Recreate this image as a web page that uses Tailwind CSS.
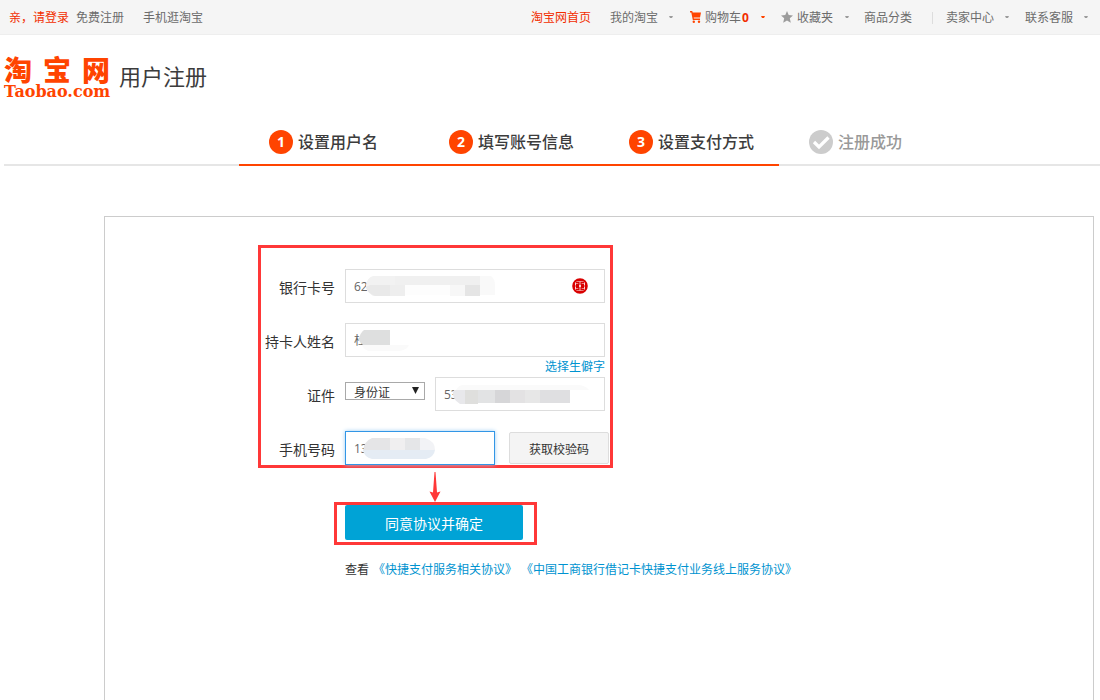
<!DOCTYPE html>
<html lang="zh-CN">
<head>
<meta charset="utf-8">
<meta name="viewport" content="width=device-width, initial-scale=1">
<title>用户注册</title>
<script src="https://cdn.jsdelivr.net/npm/@tailwindcss/browser@4"></script>
</head>
<body class="flex min-h-screen flex-col overflow-x-hidden bg-white font-['Open_Sans','Noto_Sans_CJK_SC',sans-serif] text-xs text-[#333]">

<nav class="flex h-[35px] shrink-0 items-center border-b border-[#eee] bg-[#f5f5f5] pt-px pl-[9px] pr-3 leading-4 whitespace-nowrap text-[#6c6c6c]">
  <a href="#" class="text-[#f22e00]">亲，请登录</a>
  <a href="#" class="ml-[7px]">免费注册</a>
  <a href="#" class="ml-[19px]">手机逛淘宝</a>
  <div class="ml-auto flex items-center">
    <a href="#" class="text-[#f22e00]">淘宝网首页</a>
    <a href="#" class="ml-[19px] flex items-center gap-[11px]">我的淘宝
      <svg class="mb-[2px] h-[2px] w-1 fill-[#9c9c9c]" viewBox="0 0 4 2"><path d="M0 0h4L3 2H1z"/></svg></a>
    <a href="#" class="ml-[17px] flex items-center">
      <svg class="mr-1 mb-px h-3 w-[11px] fill-[#ff4400]" viewBox="0 0 11 12"><path d="M0 0h2.2l.5 1.500H11L10 6.500H3.700l.2 1H10V9H2.800L1.300 1.500H0z"/><circle cx="3.800" cy="10.700" r="1.200"/><circle cx="9" cy="10.700" r="1.200"/></svg>
      购物车<b class="ml-px w-2 text-[#f22e00]">0</b>
      <svg class="ml-[11px] mb-[2px] h-[2px] w-1 fill-[#ff4400]" viewBox="0 0 4 2"><path d="M0 0h4L3 2H1z"/></svg></a>
    <a href="#" class="ml-4 flex items-center">
      <svg class="mr-1 mb-px h-3 w-3 fill-[#9c9c9c]" viewBox="0 0 12 12"><path d="M6 0l1.700 4 4.300.4-3.200 2.900 1 4.400L6 9.400l-3.800 2.300 1-4.400L0 4.400 4.300 4z"/></svg>
      收藏夹
      <svg class="ml-3 mb-[2px] h-[2px] w-1 fill-[#9c9c9c]" viewBox="0 0 4 2"><path d="M0 0h4L3 2H1z"/></svg></a>
    <a href="#" class="ml-[15px]">商品分类</a>
    <span class="ml-5 h-3 w-px bg-[#ddd]"></span>
    <a href="#" class="ml-[13px] flex items-center gap-[11px]">卖家中心
      <svg class="mb-[2px] h-[2px] w-1 fill-[#9c9c9c]" viewBox="0 0 4 2"><path d="M0 0h4L3 2H1z"/></svg></a>
    <a href="#" class="ml-4 flex items-center gap-[11px]">联系客服
      <svg class="mb-[2px] h-[2px] w-1 fill-[#9c9c9c]" viewBox="0 0 4 2"><path d="M0 0h4L3 2H1z"/></svg></a>
  </div>
</nav>

<header class="flex h-[87px] shrink-0 items-start pl-1 pt-5">
  <a href="#" aria-label="淘宝网" class="w-[106px] text-[#ff4400]">
    <span class="flex h-7 items-center justify-between font-['Noto_Sans_CJK_SC',sans-serif] text-[28px] font-black leading-7"><span>淘</span><span>宝</span><span>网</span></span>
    <span class="block pt-px text-center font-['DejaVu_Serif',serif] text-base font-bold leading-4">Taobao.com</span>
  </a>
  <h1 class="ml-[9px] mt-[5px] text-[22px] leading-8 text-[#3c3c3c]">用户注册</h1>
</header>

<ol class="ml-1 flex h-11 shrink-0 text-base font-medium text-[#3c3c3c]">
  <li class="w-[235px] shrink-0 border-b-2 border-[#e6e6e6]" role="presentation"></li>
  <li class="flex w-[180px] items-start gap-[5px] border-b-2 border-[#ff4400] pl-[30px] pt-2 leading-6"><span class="flex size-6 items-center justify-center rounded-full bg-[#ff4400] text-sm font-bold text-white">1</span>设置用户名</li>
  <li class="flex w-[180px] items-start gap-[5px] border-b-2 border-[#ff4400] pl-[30px] pt-2 leading-6"><span class="flex size-6 items-center justify-center rounded-full bg-[#ff4400] text-sm font-bold text-white">2</span>填写账号信息</li>
  <li class="flex w-[180px] items-start gap-[5px] border-b-2 border-[#ff4400] pl-[30px] pt-2 leading-6"><span class="flex size-6 items-center justify-center rounded-full bg-[#ff4400] text-sm font-bold text-white">3</span>设置支付方式</li>
  <li class="flex grow items-start gap-[5px] border-b-2 border-[#e6e6e6] pl-[30px] pt-2 leading-6 text-[#999]"><svg class="size-6" viewBox="0 0 24 24"><circle cx="12" cy="12" r="12" fill="#ccc"/><path d="M5 12l5 5L19.500 7.500" fill="none" stroke="#fff" stroke-width="3.200"/></svg>注册成功</li>
</ol>

<main class="ml-[104px] mr-[6px] mt-[50px] grow border border-b-0 border-[#ccc] pb-10 pl-[153px] pt-7">
  <form>
    <div class="flex w-[355px] flex-col border-3 border-[#ff3838] pt-[21px]">
      <div class="flex h-[34px] gap-[10px]">
        <label for="card" class="w-[74px] pt-[9px] text-right text-sm leading-5 whitespace-nowrap">银行卡号</label>
        <div class="relative w-[260px]">
          <input id="card" value="62" class="h-[34px] w-full border border-[#ddd] px-2 text-xs text-[#666] outline-none">
          <svg class="absolute left-5 top-[7px] h-5 w-[130px]" viewBox="0 0 130 20"><path d="M8 0h22v20H8Q0 15 1 9 2 2 8 0" fill="#f2f2f2"/><path d="M5 9h20v11H10Q2 17 1 11z" fill="#e9e9e9"/><path d="M25 9h15v11H25z" fill="#eee"/><path d="M30 0h85v9H30z" fill="#f0f0f0"/><path d="M40 9h45v10H40z" fill="#fdfdfd"/><path d="M85 9h15v11H85z" fill="#f7f7f7"/><path d="M100 9h15v11h-15z" fill="#e5e5e5"/><path d="M115 0h11q4 3 4 9v10h-15z" fill="#f9f9f9"/></svg>
          <svg class="absolute left-[227px] top-[9px] size-4" viewBox="0 0 16 16" fill="none"><circle cx="8" cy="8" r="6.800" fill="#fff" stroke="#d90000" stroke-width="2"/><path d="M5 2.500h6M5 13.500h6M2.500 5v6M13.500 5v6M4 4.500h3v2H4M12 4.500H9v2h3M4 11.500h3v-2H4M12 11.500H9v-2h3M3.500 8H7M9 8h3.500" stroke="#d90000" stroke-width="1.300"/></svg>
        </div>
      </div>
      <div class="mt-5 flex h-[34px] gap-[10px]">
        <label for="holder" class="w-[74px] pt-[9px] text-right text-sm leading-5 whitespace-nowrap">持卡人姓名</label>
        <div class="relative w-[260px]">
          <input id="holder" value="杜" class="h-[34px] w-full border border-[#ddd] px-2 text-xs text-[#666] outline-none">
          <svg class="absolute left-[14px] top-[7px] h-[22px] w-[52px]" viewBox="0 0 52 22"><path d="M5 0h26v16H6Q0 13 0 9 1 3 5 0" fill="#dedfdf"/><path d="M3 15h47q-3 6-12 6H10Q5 20 3 15" fill="#fafafa"/></svg>
        </div>
      </div>
      <a href="#" class="mr-[5px] h-5 self-end text-xs leading-5 text-[#0093d0]">选择生僻字</a>
      <div class="flex h-[34px] gap-[10px]">
        <label for="idtype" class="w-[74px] pt-[9px] text-right text-sm leading-5 whitespace-nowrap">证件</label>
        <div class="relative mt-[5px] h-[18px] w-20">
          <select id="idtype" class="block h-[18px] w-20 appearance-none border border-[#a9a9a9] bg-white pt-[2px] pl-2 text-xs leading-4 text-[#333]"><option>身份证</option></select>
          <svg class="pointer-events-none absolute right-[6px] top-[5px] h-[7px] w-[7px] fill-[#222]" viewBox="0 0 7 7"><path d="M0 0h7L3.500 7z"/></svg>
        </div>
        <div class="relative w-[170px]">
          <input aria-label="证件号码" value="53" class="h-[34px] w-full border border-[#ddd] px-2 text-xs text-[#666] outline-none">
          <svg class="absolute left-[17px] top-2 h-5 w-[140px]" viewBox="0 0 140 20"><path d="M10 0h115q8 0 12 5H4q2-4 6-5" fill="#fafafa"/><path d="M2 5h11v14H8Q0 14 1 7z" fill="#e8e8eb"/><path d="M13 5h13v14H13z" fill="#dfdfdd"/><path d="M26 5h17v13H26z" fill="#e2e3e4"/><path d="M43 5h15v13H43z" fill="#d6d6d8"/><path d="M58 5h15v13H58z" fill="#e3e2e3"/><path d="M73 5h15v13H73z" fill="#e7e7e7"/><path d="M88 5h30v13H88z" fill="#dfdfe1"/></svg>
        </div>
      </div>
      <div class="mt-5 flex h-[34px] gap-[10px]">
        <label for="phone" class="w-[74px] pt-[9px] text-right text-sm leading-5 whitespace-nowrap">手机号码</label>
        <div class="relative w-[150px]">
          <input id="phone" value="13" class="h-[34px] w-full border border-[#3296e6] px-2 text-xs text-[#666] shadow-[0_0_4px_#9ccbf2] outline-none">
          <svg class="absolute left-[18px] top-[7px] h-[21px] w-[73px]" viewBox="0 0 73 21"><path d="M9 0h18v13H0Q1 3 9 0" fill="#e5e5e7"/><path d="M27 0h15v12H27z" fill="#f0eff0"/><path d="M42 0h15v12H42z" fill="#e5e6e8"/><path d="M57 0h5q10 3 10 12H57z" fill="#f2f3f6"/><path d="M0 12h72q-1 7-9 9H9q-8-2-9-9" fill="#e5ecf4"/></svg>
        </div>
        <button type="button" class="ml-1 mt-px h-8 w-[100px] shrink-0 rounded-xs border border-[#ddd] bg-[#f4f4f4] pt-[3px] text-xs text-[#333]">获取校验码</button>
      </div>
    </div>

    <svg class="ml-[171px] mt-1 h-[30px] w-3 fill-[#ff3838]" viewBox="0 0 12 30"><path d="M5.500 0h1L8 20.500l3.500-1L6 30 .5 19.500l3.500 1z"/></svg>
    <div class="ml-[76px] w-[203px] border-3 border-[#ff3838] pb-[2px] pl-2">
      <button type="submit" class="block h-[35px] w-[178px] rounded-xs bg-[#00a3d6] pt-[2px] text-sm text-white">同意协议并确定</button>
    </div>
    <p class="ml-[87px] mt-[15px] flex leading-5 whitespace-nowrap">查看<a href="#" class="ml-1 text-[#0093d0]">《快捷支付服务相关协议》</a><a href="#" class="ml-1 text-[#0093d0]">《中国工商银行借记卡快捷支付业务线上服务协议》</a></p>
  </form>
</main>
</body>
</html>
